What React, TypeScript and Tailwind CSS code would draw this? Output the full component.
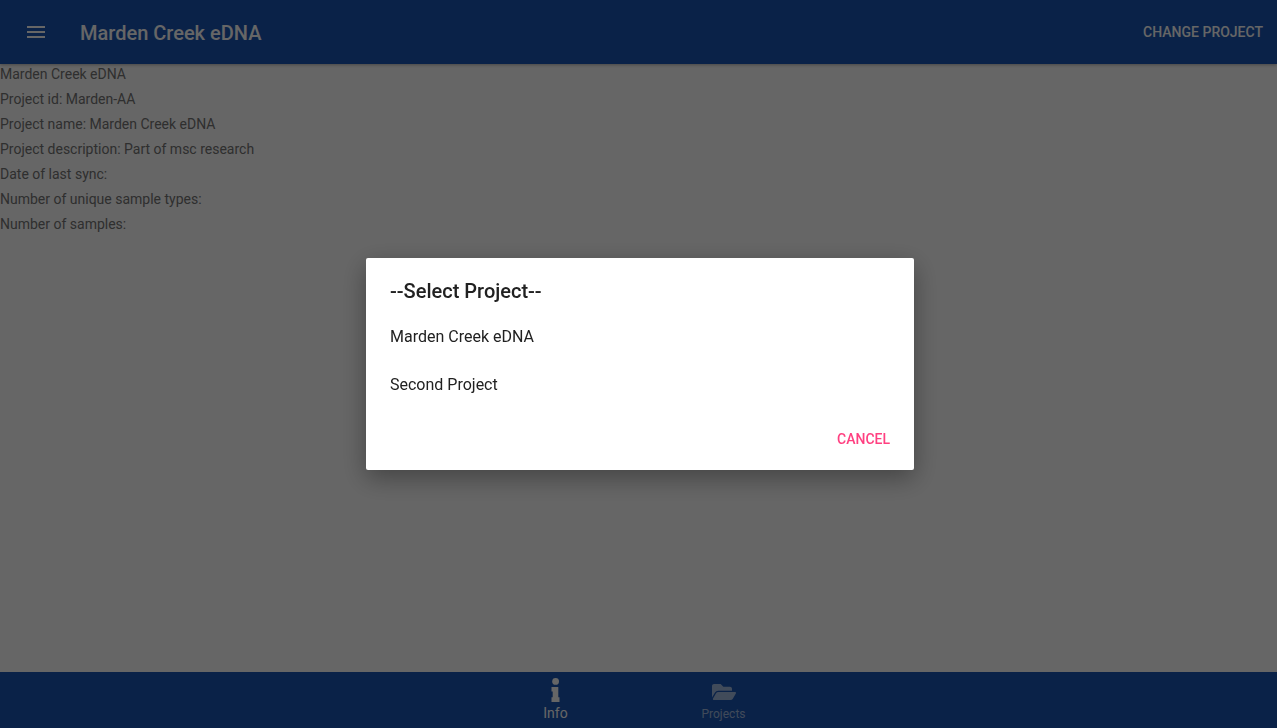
import { FaFolderOpen } from "react-icons/fa";

const details = [
  "Marden Creek eDNA",
  "Project id: Marden-AA",
  "Project name: Marden Creek eDNA",
  "Project description: Part of msc research",
  "Date of last sync:",
  "Number of unique sample types:",
  "Number of samples:",
];

const projects = ["Marden Creek eDNA", "Second Project"];

function InfoIcon() {
  return (
    <svg viewBox="0 0 9 24" className="h-6 w-[9px] fill-current" aria-hidden="true">
      <circle cx="4.6" cy="3.4" r="3.4" />
      <path d="M.5 9h6.8v10.2h1.2V24H.5v-4.8h1.2v-5.7H.5z" />
    </svg>
  );
}

function TopBar() {
  return (
    <header className="z-10 flex h-16 shrink-0 items-center bg-[#1955b4] pr-3.5 pl-6 text-white shadow-[0_1px_3px_rgba(0,0,0,0.3)]">
      <button type="button" aria-label="Open menu" className="size-6">
        <svg viewBox="0 0 24 24" className="size-6 fill-current" aria-hidden="true">
          <path d="M3 18h18v-2H3v2zm0-5h18v-2H3v2zm0-7v2h18V6H3z" />
        </svg>
      </button>
      <h1 className="ml-8 pt-0.5 text-xl font-medium">Marden Creek eDNA</h1>
      <button type="button" className="ml-auto text-sm font-medium uppercase">
        Change project
      </button>
    </header>
  );
}

function BottomNav() {
  return (
    <nav className="flex h-14 shrink-0 justify-center bg-[#1955b4] pl-0.5 text-white">
      <a href="#info" aria-current="page" className="flex w-[168px] flex-col items-center pt-1.5">
        <InfoIcon />
        <span className="mt-px text-sm leading-5">Info</span>
      </a>
      <a href="#projects" className="flex w-[168px] flex-col items-center pt-2 text-white/60">
        <FaFolderOpen className="size-6" aria-hidden="true" />
        <span className="mt-0.5 text-xs">Projects</span>
      </a>
    </nav>
  );
}

function ProjectDialog() {
  return (
    <div className="fixed inset-0 z-20 flex items-center justify-center bg-black/60 pl-[3px]">
      <div
        role="dialog"
        aria-modal="true"
        aria-labelledby="dialog-title"
        className="w-full max-w-[548px] rounded-[2px] bg-white pt-[17px] pb-[7px] text-[#212121] shadow-[0_8px_26px_rgba(0,0,0,0.35)]"
      >
        <h2 id="dialog-title" className="px-6 text-xl leading-8 font-medium">
          --Select Project--
        </h2>
        <ul className="pt-1.5">
          {projects.map((project) => (
            <li key={project}>
              <button type="button" className="h-12 w-full px-6 text-left text-base">
                {project}
              </button>
            </li>
          ))}
        </ul>
        <div className="flex justify-end pt-1.5 pr-4">
          <button type="button" className="h-12 px-2 text-sm font-medium text-[#ff4081] uppercase">
            Cancel
          </button>
        </div>
      </div>
    </div>
  );
}

export default function App() {
  return (
    <div className="flex min-h-screen flex-col bg-white font-[Roboto,sans-serif]">
      <TopBar />
      <main className="grow text-sm text-[#757575]">
        {details.map((line) => (
          <p key={line} className="h-[25px] leading-5">
            {line}
          </p>
        ))}
      </main>
      <BottomNav />
      <ProjectDialog />
    </div>
  );
}
